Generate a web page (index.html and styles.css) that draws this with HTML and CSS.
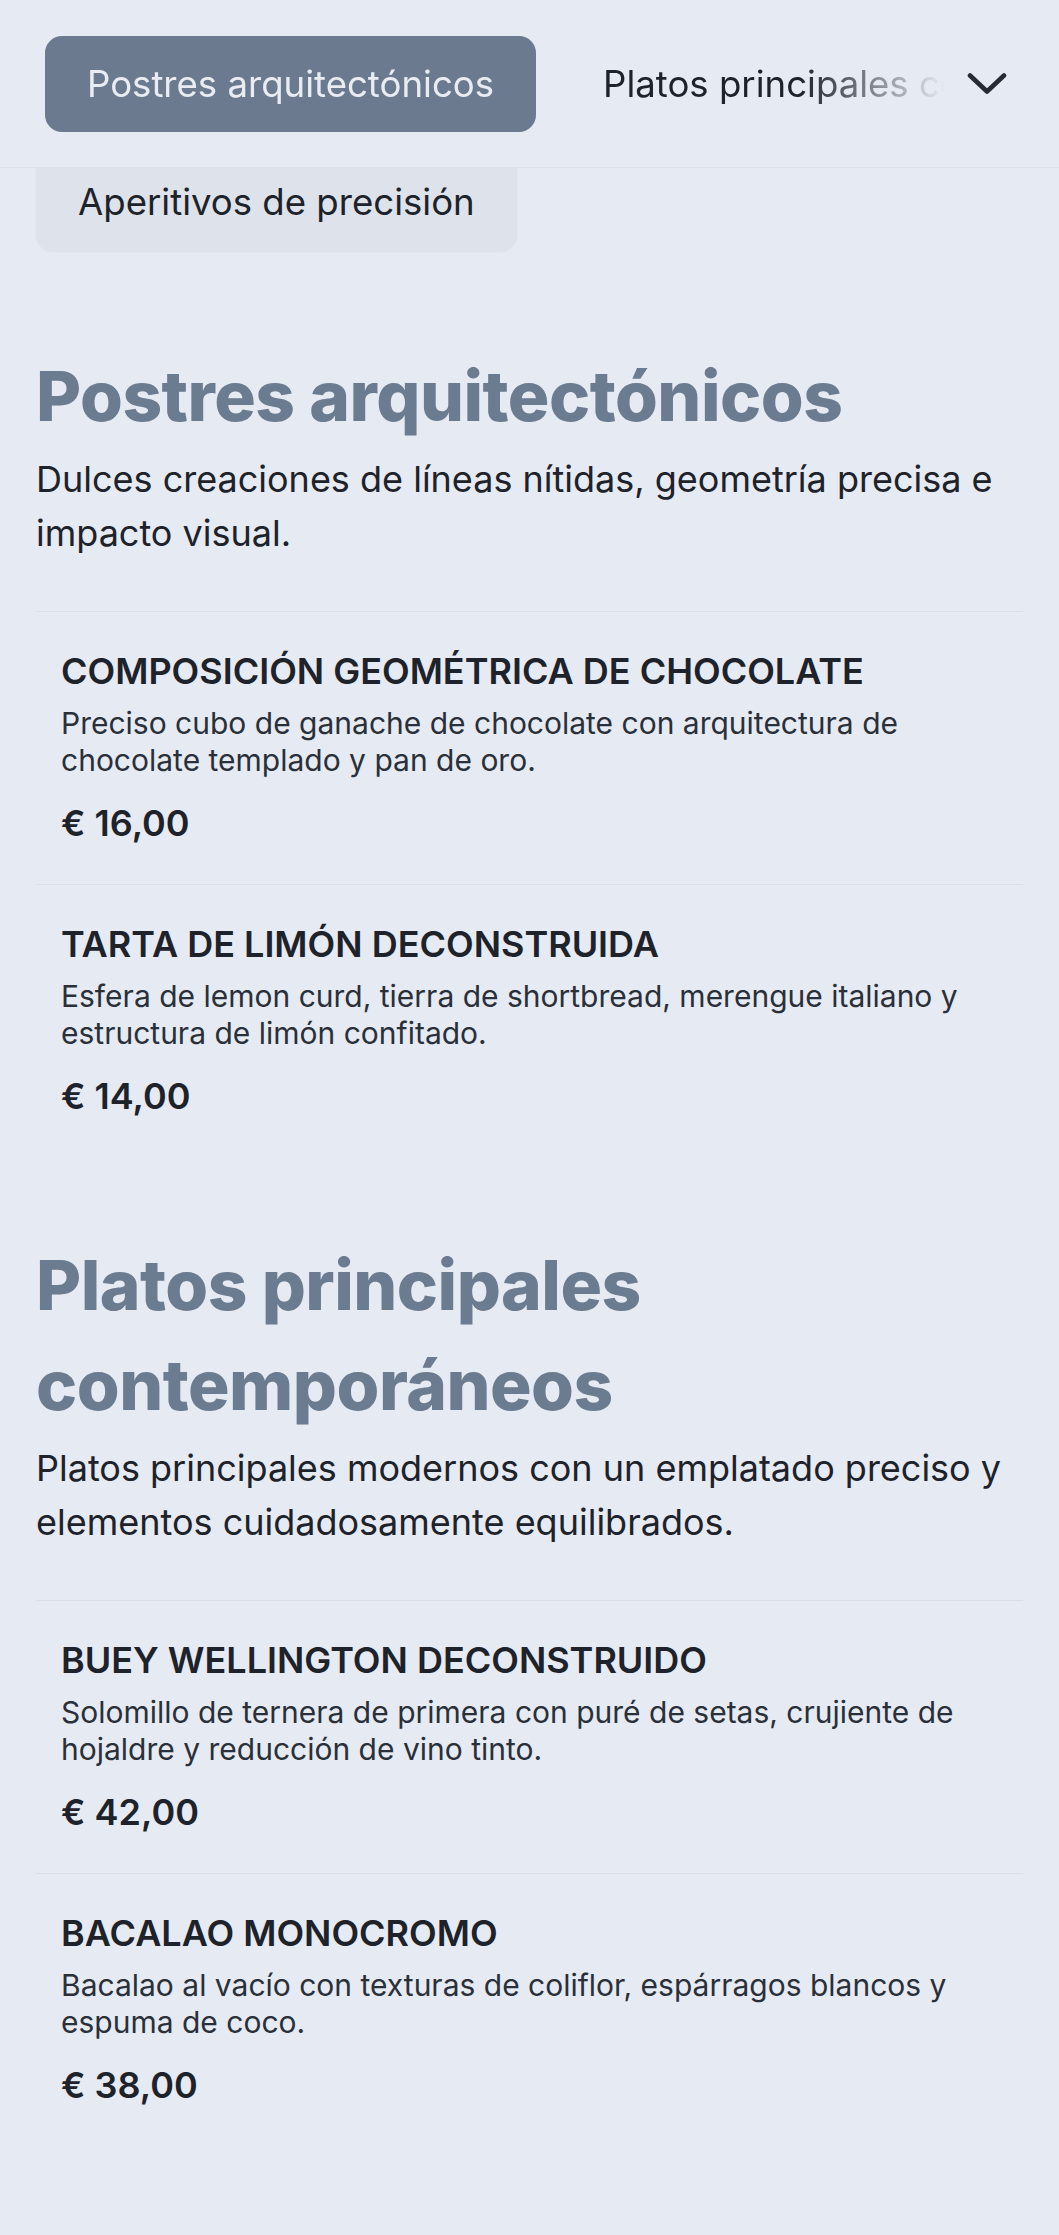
FILE: index.html
```html
<!DOCTYPE html>
<html lang="es">
<head>
<meta charset="utf-8">
<title>Menú</title>
<link rel="stylesheet" href="styles.css">
</head>
<body>
<header class="topbar">
  <nav class="tabs">
    <a class="tab tab-active" href="#postres">Postres arquitectónicos</a>
    <a class="tab" href="#principales">Platos principales contemporáneos</a>
  </nav>
  <button class="more" type="button" aria-label="Más categorías">
    <svg class="chevron" viewBox="0 0 40 24" width="40" height="24" aria-hidden="true">
      <path d="M3 3.5 L20 19.5 L37 3.5" fill="none" stroke="#262b34" stroke-width="4.6" stroke-linecap="round" stroke-linejoin="round"/>
    </svg>
  </button>
</header>
<div class="peek">
  <span class="chip">Aperitivos de precisión</span>
</div>
<main class="menu">
  <section class="category" id="postres">
    <h2 class="cat-title">Postres arquitectónicos</h2>
    <p class="cat-desc">Dulces creaciones de líneas nítidas, geometría precisa e impacto visual.</p>
    <ul class="items">
      <li class="item">
        <h3 class="item-name">COMPOSICIÓN GEOMÉTRICA DE CHOCOLATE</h3>
        <p class="item-desc">Preciso cubo de ganache de chocolate con arquitectura de chocolate templado y pan de oro.</p>
        <div class="price">€ 16,00</div>
      </li>
      <li class="item">
        <h3 class="item-name">TARTA DE LIMÓN DECONSTRUIDA</h3>
        <p class="item-desc">Esfera de lemon curd, tierra de shortbread, merengue italiano y estructura de limón confitado.</p>
        <div class="price">€ 14,00</div>
      </li>
    </ul>
  </section>
  <section class="category" id="principales">
    <h2 class="cat-title">Platos principales contemporáneos</h2>
    <p class="cat-desc">Platos principales modernos con un emplatado preciso y elementos cuidadosamente equilibrados.</p>
    <ul class="items">
      <li class="item">
        <h3 class="item-name">BUEY WELLINGTON DECONSTRUIDO</h3>
        <p class="item-desc">Solomillo de ternera de primera con puré de setas, crujiente de hojaldre y reducción de vino tinto.</p>
        <div class="price">€ 42,00</div>
      </li>
      <li class="item">
        <h3 class="item-name">BACALAO MONOCROMO</h3>
        <p class="item-desc">Bacalao al vacío con texturas de coliflor, espárragos blancos y espuma de coco.</p>
        <div class="price">€ 38,00</div>
      </li>
    </ul>
  </section>
</main>
</body>
</html>
```
FILE: styles.css
```css
* { box-sizing: border-box; }

html, body {
  margin: 0;
  padding: 0;
}

body {
  background: #e6eaf2;
  color: #1d222b;
  font-family: Inter, "Noto Sans", "Liberation Sans", sans-serif;
  min-height: 2235px;
}

.topbar {
  display: flex;
  align-items: center;
  height: 168px;
  padding: 0 44px 0 45px;
  border-bottom: 1px solid #dce1e9;
  background: #e6eaf2;
}

.tabs {
  flex: 1;
  min-width: 0;
  display: flex;
  gap: 25px;
  overflow: hidden;
  white-space: nowrap;
  -webkit-mask-image: linear-gradient(90deg, #000 0, #000 calc(100% - 145px), transparent 100%);
  mask-image: linear-gradient(90deg, #000 0, #000 calc(100% - 145px), transparent 100%);
}

.tab {
  flex: none;
  display: block;
  padding: 21px 42px;
  font-size: 36.6px;
  line-height: 54px;
  color: #1d222b;
  text-decoration: none;
  border-radius: 17px;
}

.tab-active {
  background: #6b7a8f;
  color: #e9edf3;
}

.more {
  flex: none;
  width: 56px;
  height: 56px;
  margin-left: 14px;
  padding: 0;
  border: 0;
  background: transparent;
  display: flex;
  align-items: center;
  justify-content: center;
}

.chevron { display: block; }

.peek {
  padding: 0 36px;
}

.chip {
  display: inline-block;
  padding: 10px 42px 25px;
  font-size: 36.6px;
  line-height: 48px;
  color: #1d222b;
  background: #dee3eb;
  border-radius: 0 0 17px 17px;
  box-shadow: 0 1px 2px rgba(30, 40, 60, 0.05);
}

.menu {
  padding: 0 36px;
}

.category {
  padding-top: 95px;
}

.category + .category {
  padding-top: 78px;
}

.cat-title {
  margin: 0;
  font-family: Inter, "Noto Sans", sans-serif;
  font-weight: 800;
  font-size: 69.3px;
  line-height: 100px;
  letter-spacing: -0.5px;
  color: #6b7b90;
}

.cat-desc {
  margin: 6px 0 0;
  font-size: 36px;
  line-height: 54px;
  color: #1d222b;
}

.items {
  list-style: none;
  margin: 51px 0 0;
  padding: 0;
}

.item {
  border-top: 1px solid #dbe0e8;
  padding: 36px 25px 37px;
}

.item-name {
  margin: 0;
  font-size: 36px;
  line-height: 47px;
  font-weight: 600;
  color: #1d222b;
}

.item-desc {
  margin: 10px 0 0;
  font-size: 30px;
  line-height: 37px;
  color: #2a303a;
}

.price {
  margin-top: 21px;
  font-size: 36px;
  line-height: 47px;
  font-weight: 600;
  color: #1d222b;
}
```
